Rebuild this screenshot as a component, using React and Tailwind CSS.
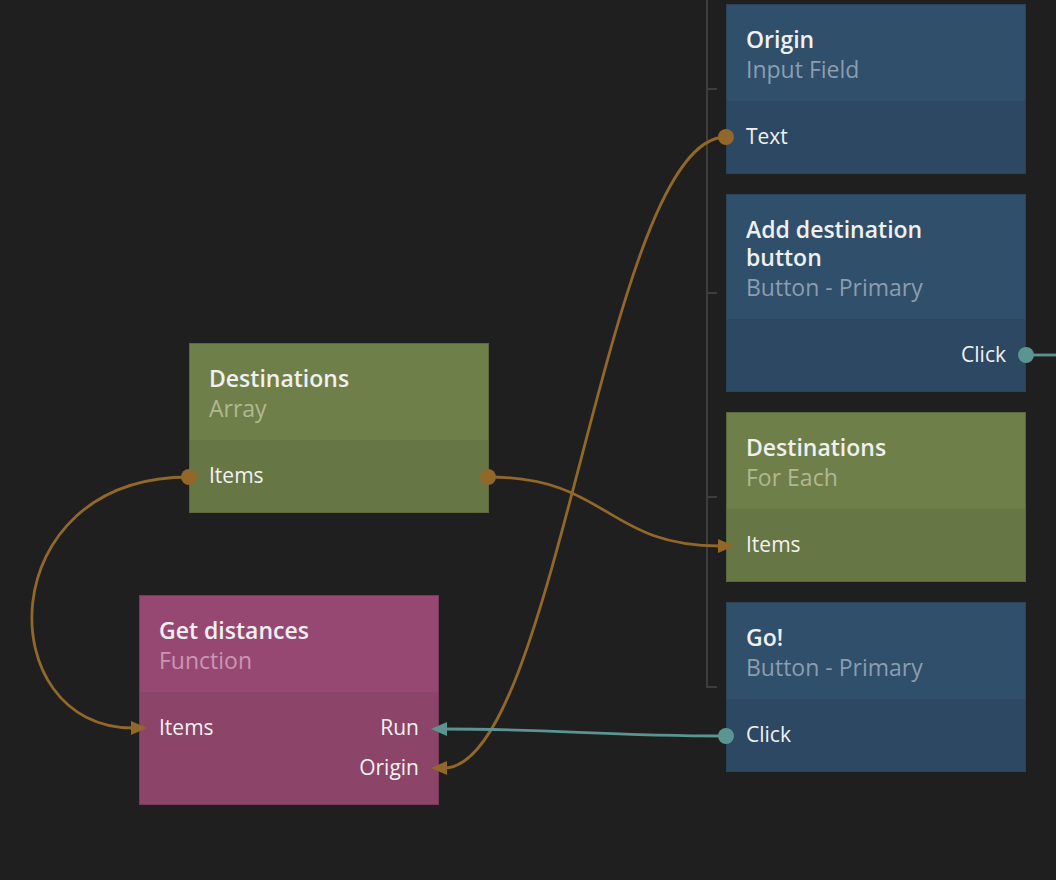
import React from "react";

const themes = {
  blue: {
    head: "bg-[#2f4f6b]",
    body: "bg-[#2c4862]",
    sub: "text-[#8b9db0]",
    border: "border-[#29435a]",
  },
  green: {
    head: "bg-[#6f7f49]",
    body: "bg-[#677645]",
    sub: "text-[#b0b894]",
    border: "border-[#5a683c]",
  },
  pink: {
    head: "bg-[#974872]",
    body: "bg-[#8c4468]",
    sub: "text-[#c996b3]",
    border: "border-[#7a3a5b]",
  },
};

function Node({ pos, theme, title, subtitle, children }) {
  const t = themes[theme];
  return (
    <div className={`absolute w-[300px] border ${t.border} ${pos}`}>
      <div className={`${t.head} pl-[19px] pr-4 pt-[20px] pb-[16px]`}>
        <div className="text-[23px] leading-[28px] font-semibold text-[#f0f0f0]">{title}</div>
        <div className={`text-[23px] leading-[32px] ${t.sub}`}>{subtitle}</div>
      </div>
      <div className={`${t.body} pl-[19px] pr-[19px] py-[16px] text-[21px] text-[#f2f2f2]`}>{children}</div>
    </div>
  );
}

const Row = ({ children, right }) => (
  <div className={`h-[40px] flex items-center ${right ? "justify-end" : "justify-between"}`}>{children}</div>
);

export default function App() {
  const orange = "#92672a";
  const cyan = "#5a9591";
  return (
    <div
      className="relative w-[1056px] h-[880px] bg-[#1f1f1f] overflow-hidden"
      style={{ fontFamily: '"Open Sans", "Noto Sans", sans-serif' }}
    >
      <Node pos="left-[726px] top-[4px]" theme="blue" title="Origin" subtitle="Input Field">
        <Row>Text</Row>
      </Node>
      <Node
        pos="left-[726px] top-[194px]"
        theme="blue"
        title={
          <>
            <div>Add destination</div>
            <div>button</div>
          </>
        }
        subtitle="Button - Primary"
      >
        <Row right>Click</Row>
      </Node>
      <Node pos="left-[726px] top-[412px]" theme="green" title="Destinations" subtitle="For Each">
        <Row>Items</Row>
      </Node>
      <Node pos="left-[726px] top-[602px]" theme="blue" title="Go!" subtitle="Button - Primary">
        <Row>Click</Row>
      </Node>
      <Node pos="left-[189px] top-[343px]" theme="green" title="Destinations" subtitle="Array">
        <Row>Items</Row>
      </Node>
      <Node pos="left-[139px] top-[595px]" theme="pink" title="Get distances" subtitle="Function">
        <Row>
          <span>Items</span>
          <span>Run</span>
        </Row>
        <Row right>Origin</Row>
      </Node>

      <svg className="absolute inset-0 pointer-events-none" width="1056" height="880" viewBox="0 0 1056 880">
        <g stroke="#3d3d3d" strokeWidth="2" fill="none">
          <path d="M707 0 V687 H717" />
          <path d="M707 89 H717" />
          <path d="M707 293 H717" />
          <path d="M707 497 H717" />
        </g>
        <g fill="none" strokeWidth="2.8">
          <path d="M726 137 C606 137 558 768 444 768" stroke={orange} />
          <path d="M488 477 C608 477 606 546 720 546" stroke={orange} />
          <path d="M189 477 C-10 477 -10 728 133 728" stroke={orange} />
          <path d="M726 736 C600 736 560 729 444 729" stroke={cyan} />
          <path d="M1026 355 H1056" stroke={cyan} />
        </g>
        <polygon points="431,768 447,761 447,775" fill={orange} />
        <polygon points="431,729 447,722 447,736" fill={cyan} />
        <polygon points="734,546 718,539 718,553" fill={orange} />
        <polygon points="147,728 131,721 131,735" fill={orange} />
        <circle cx="726" cy="137" r="8" fill={orange} />
        <circle cx="488" cy="477" r="8" fill={orange} />
        <circle cx="189" cy="477" r="8" fill={orange} />
        <circle cx="726" cy="736" r="8" fill={cyan} />
        <circle cx="1026" cy="355" r="8" fill={cyan} />
      </svg>
    </div>
  );
}
